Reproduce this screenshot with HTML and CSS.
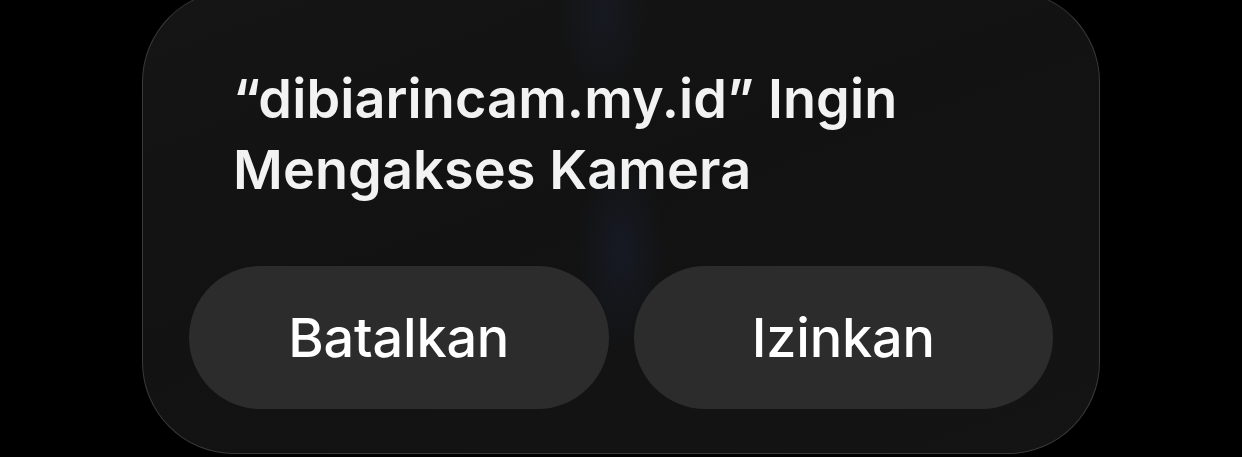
FILE: index.html
```html
<!DOCTYPE html>
<html lang="id">
<head>
<meta charset="utf-8">
<title>Izin Kamera</title>
<link rel="stylesheet" href="styles.css">
</head>
<body>
<div class="screen">
  <div class="alert">
    <h1 class="alert-title">“dibiarincam.my.id” Ingin<br>Mengakses Kamera</h1>
    <div class="alert-actions">
      <button class="alert-btn">Batalkan</button>
      <button class="alert-btn">Izinkan</button>
    </div>
  </div>
</div>
</body>
</html>
```
FILE: styles.css
```css
html, body {
  margin: 0;
  padding: 0;
  background: #000;
  height: 100%;
  overflow: hidden;
}

.screen {
  padding-left: 142px;
}

.alert {
  box-sizing: border-box;
  width: 958px;
  height: 464px;
  margin-top: -10px;
  border-radius: 92px;
  border: 1px solid #3a3a3a;
  border-top-color: #333;
  background:
    radial-gradient(ellipse 45px 100px at 478px 260px, rgba(30, 45, 80, 0.28), rgba(30, 45, 80, 0) 100%),
    radial-gradient(ellipse 45px 80px at 460px 25px, rgba(30, 45, 80, 0.22), rgba(30, 45, 80, 0) 100%),
    linear-gradient(160deg, #151515 0%, #121212 45%, #141414 100%);
  padding: 72px 46px 46px 46px;
  display: flex;
  flex-direction: column;
  font-family: Inter, "Noto Sans", sans-serif;
}

.alert-title {
  margin: 0 0 61px 0;
  padding-left: 44px;
  font-size: 54px;
  line-height: 71px;
  font-weight: 600;
  color: #f2f2f2;
  letter-spacing: 0.1px;
}

.alert-actions {
  display: flex;
  gap: 25px;
}

.alert-btn {
  width: 420px;
  height: 143px;
  border: none;
  border-radius: 72px;
  background: #2c2c2c;
  color: #fff;
  font-family: Inter, "Noto Sans", sans-serif;
  font-size: 54px;
  font-weight: 500;
  letter-spacing: -0.2px;
  padding: 0;
}
```
